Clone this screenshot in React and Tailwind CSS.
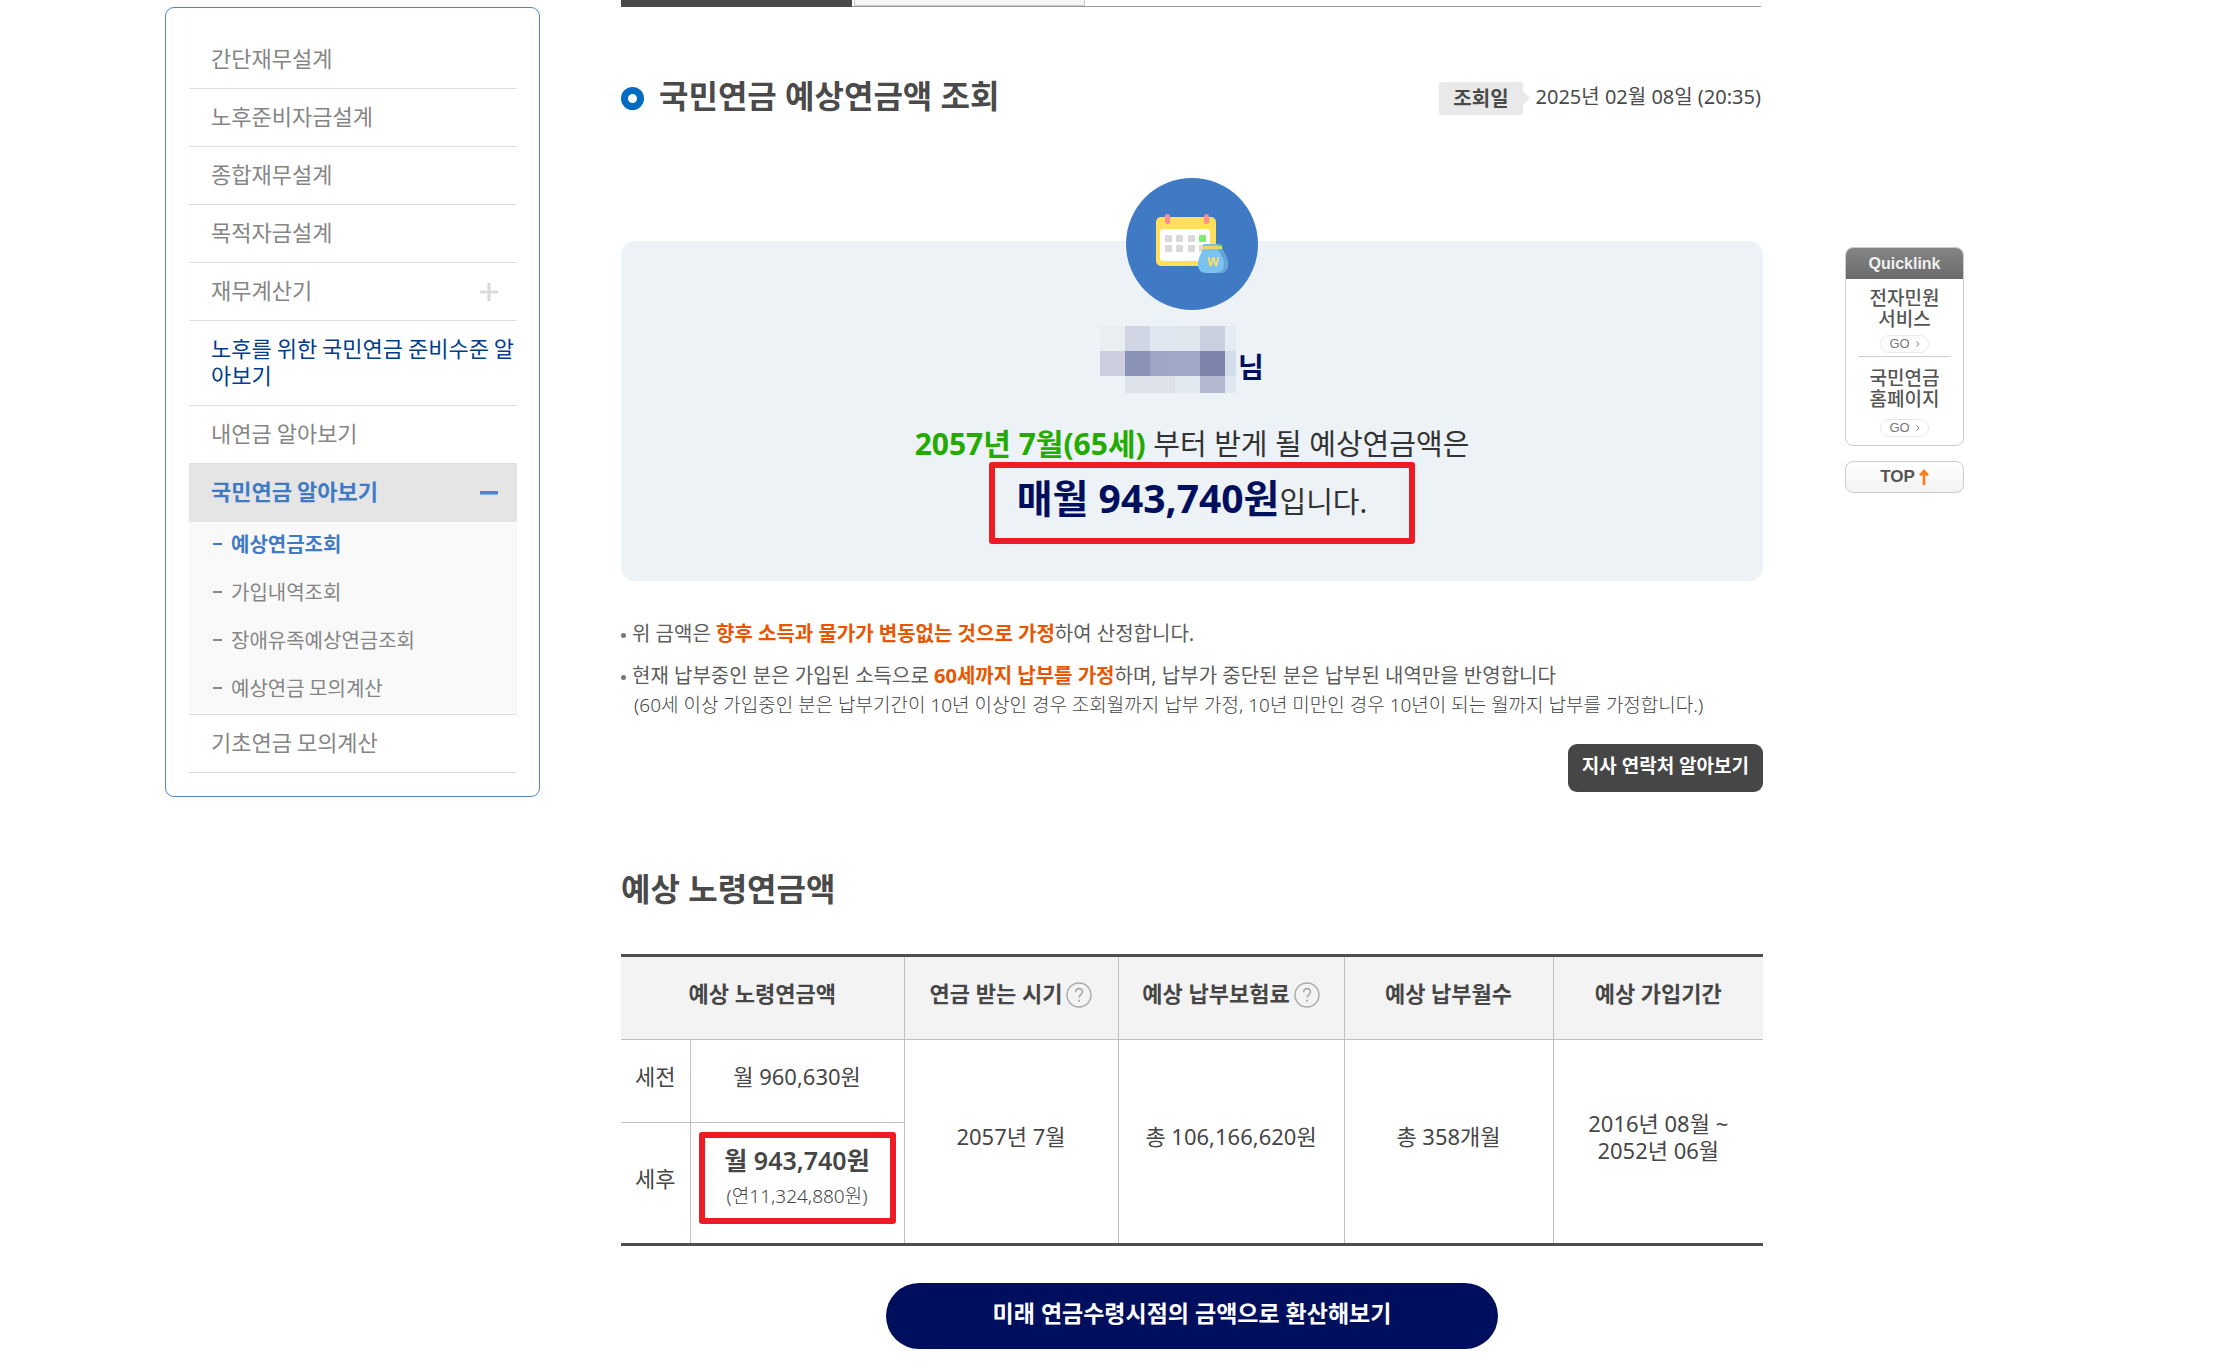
import { useState } from "react";

const menu = [
  { label: "간단재무설계" },
  { label: "노후준비자금설계" },
  { label: "종합재무설계" },
  { label: "목적자금설계" },
  { label: "재무계산기", expandable: true },
  { label: "노후를 위한 국민연금 준비수준 알아보기", visited: true },
  { label: "내연금 알아보기" },
];

const subMenu = ["예상연금조회", "가입내역조회", "장애유족예상연금조회", "예상연금 모의계산"];

// Blocks that hide the customer's name: [x, y, width, height, colour]
const nameBlocks = [
  [0, 0, 25, 25, "#e9eef2"],
  [25, 0, 25, 25, "#cfd5e2"],
  [50, 0, 25, 25, "#dee6ef"],
  [75, 0, 25, 25, "#e0e7ee"],
  [100, 0, 25, 25, "#c9cfde"],
  [125, 0, 11, 25, "#e3ebf3"],
  [0, 25, 25, 25, "#ccd0de"],
  [25, 25, 25, 25, "#8a92b8"],
  [50, 25, 25, 25, "#9fa7c6"],
  [75, 25, 25, 25, "#a0a8c8"],
  [100, 25, 25, 25, "#7d84ac"],
  [125, 25, 11, 25, "#d2deec"],
  [25, 50, 25, 17, "#dde1e9"],
  [50, 50, 25, 17, "#dce1ea"],
  [75, 50, 25, 17, "#e2e9f1"],
  [100, 50, 25, 17, "#b2b9d1"],
  [125, 50, 11, 17, "#dfe7ef"],
];

const PensionIcon = () => (
  <svg viewBox="0 0 132 132" className="w-[132px] h-[132px]">
    <circle cx="66" cy="66" r="66" fill="#407ac5" />
    <rect x="30" y="39" width="60" height="49" rx="5" fill="#ffdf5b" />
    <rect x="34" y="51" width="50" height="32" rx="3" fill="#fff" />
    <rect x="39" y="36" width="5" height="10" rx="2.5" fill="#ff8f8f" />
    <rect x="78" y="36" width="5" height="10" rx="2.5" fill="#ff8f8f" />
    <g fill="#d9d9d9">
      <rect x="39" y="57" width="7" height="7" rx="1" />
      <rect x="50" y="57" width="7" height="7" rx="1" />
      <rect x="62" y="57" width="7" height="7" rx="1" />
      <rect x="39" y="67" width="7" height="7" rx="1" />
      <rect x="50" y="67" width="7" height="7" rx="1" />
      <rect x="62" y="67" width="7" height="7" rx="1" />
      <rect x="73" y="67" width="7" height="7" rx="1" />
    </g>
    <rect x="73" y="57" width="7" height="7" rx="1" fill="#7ded6f" />
    <path d="M77 66h19v4c2 5 6 10 6 16 0 6-3 9-8 9H80c-5 0-8-3-8-9 0-7 4-11 5-16z" fill="#7cc2f0" />
    <path d="M92 66h4v4c2 5 6 10 6 16 0 6-3 9-8 9h-5c5 0 9-3 9-9 0-7-5-11-6-16z" fill="#64a5d5" />
    <rect x="77" y="68" width="19" height="3" fill="#e8d66c" />
    <text x="87" y="88" textAnchor="middle" fontSize="12" fontWeight="700" fill="#ffdf5b">W</text>
  </svg>
);

const HelpIcon = () => (
  <svg viewBox="0 0 26 26" className="w-[26px] h-[26px]" fill="none" stroke="#aaa">
    <circle cx="13" cy="13" r="12" strokeWidth="1.4" />
    <path d="M9.6 10.2c0-2.2 1.4-3.6 3.4-3.6s3.4 1.3 3.4 3.2c0 2.6-3.3 3-3.3 5.8" strokeWidth="1.6" />
    <path d="M13 17.8v2" strokeWidth="1.8" />
  </svg>
);

const GoLink = ({ label }) => (
  <a href="#go" aria-label={label} className="flex items-center gap-[6px] h-[18px] px-2 rounded-full border border-[#e8e8e8] text-[13px] leading-4 text-[#777] font-['Liberation_Sans',sans-serif]">
    GO
    <svg viewBox="0 0 4 6" className="w-1 h-[6px]" fill="none" stroke="#888">
      <path d="M0.5 0.5L3 3L0.5 5.5" />
    </svg>
  </a>
);

const Sidebar = () => {
  const [open, setOpen] = useState(true);

  return (
    <nav className="w-[375px] shrink-0 mt-[7px] pl-[23px] pr-[22px] py-[23px] border border-[#4f85cf] rounded-[9px] font-['Noto_Sans_CJK_KR',sans-serif] text-[22px] leading-[27px] text-[#858585]">
      <ul>
        {menu.map((item) => (
          <li key={item.label} className="flex items-start justify-between pl-[22px] pt-[13px] pb-[17px] border-b border-[#dedede]">
            <a href="#menu" className={item.visited ? "break-all text-[#003d8a]" : ""}>{item.label}</a>
            {item.expandable && (
              <svg viewBox="0 0 18 18" className="w-[18px] h-[18px] mt-[7px] mr-[19px]" stroke="#dadada" strokeWidth="3">
                <path d="M9 0v18M0 9h18" />
              </svg>
            )}
          </li>
        ))}
        <li className="border-b border-[#dedede]">
          <button onClick={() => setOpen(!open)} className="flex w-full items-center justify-between pl-[22px] pr-[19px] pt-[13px] pb-[18px] bg-[#e5e5e5] font-bold text-[#407ac5]">
            국민연금 알아보기
            <svg viewBox="0 0 18 4" className="w-[18px] h-1 mt-1">
              <path d="M0 0h18v3H0z" fill="#4c84d4" />
              <path d="M0 3h18v1H0z" fill="#8fb2e6" />
            </svg>
          </button>
          {open && (
            <ul className="bg-[#f9f9f9] text-[20px] leading-6">
              {subMenu.map((label, i) => (
                <li key={label} className={i === 0 ? "font-bold text-[#407ac5]" : ""}>
                  <a href="#submenu" className="flex items-center h-12 pl-[24px] pb-1">
                    <span className="w-[9px] h-[2px] mr-[9px] bg-current" />
                    {label}
                  </a>
                </li>
              ))}
            </ul>
          )}
        </li>
        <li className="pl-[22px] pt-[13px] pb-[17px] border-b border-[#dedede]">
          <a href="#basic">기초연금 모의계산</a>
        </li>
      </ul>
    </nav>
  );
};

const QuickLink = () => (
  <aside className="w-[119px] shrink-0 mt-[247px] font-['Liberation_Sans','Noto_Sans_CJK_KR',sans-serif]">
    <div className="rounded-lg border border-[#ccc] overflow-hidden">
      <h2 className="h-[31px] text-center text-[16px] leading-[31px] font-bold text-[#f0f0f0] bg-linear-to-b from-[#858585] to-[#6a6a6a]">Quicklink</h2>
      <div className="flex flex-col items-center mx-3 pt-[9px] pb-[3px] border-b border-[#ccc] text-center text-[19px] leading-[21px] font-medium text-[#555]">
        <p className="mb-[5px]">전자민원<br />서비스</p>
        <GoLink label="전자민원 서비스 바로가기" />
      </div>
      <div className="flex flex-col items-center pt-[11px] pb-2 text-center text-[19px] leading-[21px] font-medium text-[#555]">
        <p className="mb-[9px]">국민연금<br />홈페이지</p>
        <GoLink label="국민연금 홈페이지 바로가기" />
      </div>
    </div>
    <a href="#top" className="flex items-center justify-center gap-1 h-8 mt-[15px] rounded-lg border border-[#ccc] bg-linear-to-b from-white to-[#f3f3f3] text-[17px] font-bold text-[#555]">
      TOP
      <svg viewBox="0 0 10 16" className="w-[10px] h-4" fill="none" stroke="#ff7a14" strokeWidth="2.6">
        <path d="M5 16V2M1 6.5L5 2L9 6.5" />
      </svg>
    </a>
  </aside>
);

const Summary = () => (
  <section className="flex flex-col items-center mt-[124px] pb-[47px] rounded-[14px] bg-[#ecf2f6] text-[#333]">
    <div className="-mt-[63px]">
      <PensionIcon />
    </div>
    <div className="flex items-end gap-[2px] mt-4 mr-5 text-[28px] leading-[52px] font-bold text-[#000e5e]">
      <svg viewBox="0 0 136 67" className="w-[136px] h-[67px]" shapeRendering="crispEdges">
        {nameBlocks.map(([x, y, w, h, color]) => (
          <rect key={`${x}-${y}`} x={x} y={y} width={w} height={h} fill={color} />
        ))}
      </svg>
      님
    </div>
    <p className="mt-[29px] text-[29px] leading-[44px]">
      <strong className="text-[30px] text-[#23ab00]">2057년 7월(65세)</strong> 부터 받게 될 예상연금액은
    </p>
    <p className="relative text-[29px] leading-[64px]">
      <strong className="text-[39px] text-[#000e5e]">매월 943,740원</strong>입니다.
      <span className="absolute -left-7 -right-12 -top-1 h-[82px] border-[6px] border-[#ed1c24] rounded-[3px]" />
    </p>
  </section>
);

const Notes = () => (
  <ul className="mt-[38px] text-[20px] leading-[30px] text-[#5c5c5c]">
    <li className="flex">
      <span className="w-[5px] h-[5px] mt-[14px] mr-[6px] rounded-full bg-[#777]" />
      <p>위 금액은 <strong className="text-[#ea5500]">향후 소득과 물가가 변동없는 것으로 가정</strong>하여 산정합니다.</p>
    </li>
    <li className="flex mt-3">
      <span className="w-[5px] h-[5px] mt-[14px] mr-[6px] rounded-full bg-[#777]" />
      <div>
        <p>현재 납부중인 분은 가입된 소득으로 <strong className="text-[#ea5500]">60세까지 납부를 가정</strong>하며, 납부가 중단된 분은 납부된 내역만을 반영합니다</p>
        <p className="pl-[2px] text-[19px] leading-7 font-light text-[#444]">(60세 이상 가입중인 분은 납부기간이 10년 이상인 경우 조회월까지 납부 가정, 10년 미만인 경우 10년이 되는 월까지 납부를 가정합니다.)</p>
      </div>
    </li>
  </ul>
);

const PensionTable = () => (
  <table className="w-full table-fixed border-collapse mt-11 border-y-[3px] border-[#4f4d4d] text-center text-[22px] leading-[27px] text-[#464646]">
    <colgroup>
      <col className="w-[69px]" />
      <col className="w-[214px]" />
      <col className="w-[214px]" />
      <col className="w-[226px]" />
      <col className="w-[209px]" />
      <col className="w-[210px]" />
    </colgroup>
    <thead className="bg-[#f3f3f3]">
      <tr className="h-[84px] border-b border-[#c0c0c0]">
        <th colSpan={2} className="pb-[10px]">예상 노령연금액</th>
        <th className="pb-[10px] border-l border-[#c0c0c0]">
          <span className="flex items-center justify-center gap-1">
            연금 받는 시기
            <button aria-label="연금 받는 시기 도움말" className="mt-1"><HelpIcon /></button>
          </span>
        </th>
        <th className="pb-[10px] border-l border-[#c0c0c0]">
          <span className="flex items-center justify-center gap-1">
            예상 납부보험료
            <button aria-label="예상 납부보험료 도움말" className="mt-1"><HelpIcon /></button>
          </span>
        </th>
        <th className="pb-[10px] border-l border-[#c0c0c0]">예상 납부월수</th>
        <th className="pb-[10px] border-l border-[#c0c0c0]">예상 가입기간</th>
      </tr>
    </thead>
    <tbody>
      <tr className="h-[83px]">
        <td className="pb-[10px] border-b border-[#c0c0c0]">세전</td>
        <td className="pb-[10px] border-b border-l border-[#c0c0c0]">월 960,630원</td>
        <td rowSpan={2} className="pb-[10px] border-l border-[#c0c0c0]">2057년 7월</td>
        <td rowSpan={2} className="pb-[10px] border-l border-[#c0c0c0]">총 106,166,620원</td>
        <td rowSpan={2} className="pb-[10px] border-l border-[#c0c0c0]">총 358개월</td>
        <td rowSpan={2} className="pb-[10px] border-l border-[#c0c0c0]">2016년 08월 ~<br />2052년 06월</td>
      </tr>
      <tr className="h-[122px]">
        <td className="pb-[10px]">세후</td>
        <td className="relative pb-[10px] border-l border-[#c0c0c0]">
          <strong className="block text-[25px] leading-9 font-semibold">월 943,740원</strong>
          <span className="block text-[19px] leading-9 font-light">(연11,324,880원)</span>
          <span className="absolute left-2 right-2 top-[9px] h-[92px] border-[6px] border-[#ed1c24] rounded-[3px]" />
        </td>
      </tr>
    </tbody>
  </table>
);

const App = () => {
  return (
    <div className="flex items-start pl-[165px] pr-[268px] bg-white font-['Noto_Sans','Noto_Sans_CJK_KR',sans-serif]">
      <Sidebar />
      <main className="flex-1 min-w-0 ml-[81px] mr-[82px]">
        <div className="flex h-[7px] mr-[2px] gap-[2px] border-b border-[#999]">
          <div className="w-[231px] h-[7px] bg-[#4a4a4a]" />
          <div className="w-[231px] h-[6px] border-x border-b border-[#ccc] bg-[#f5f5f5]" />
        </div>

        <header className="flex items-center justify-between mt-[68px] mr-[2px]">
          <h1 className="flex items-center gap-[15px] text-[32px] leading-[42px] font-bold text-[#4a4a4a]">
            <span className="w-[23px] h-[23px] mt-1 rounded-full border-[7px] border-[#006bc0]" />
            국민연금 예상연금액 조회
          </h1>
          <p className="flex items-center text-[20px] leading-[33px] text-[#4a4a4a]">
            <strong className="mt-1 px-[14px] rounded-[3px] bg-[#e9e9e9] leading-[33px]">조회일</strong>
            <svg viewBox="0 0 7 14" className="w-[7px] h-[14px] mt-1 mr-[6px]">
              <path d="M0 0L7 7L0 14z" fill="#e9e9e9" />
            </svg>
            2025년 02월 08일 (20:35)
          </p>
        </header>

        <Summary />
        <Notes />

        <div className="flex justify-end mt-[25px]">
          <button className="h-12 px-[14px] pb-1 rounded-[9px] bg-[#464646] text-[19px] font-bold text-white">지사 연락처 알아보기</button>
        </div>

        <h2 className="mt-[76px] text-[32px] leading-[42px] font-bold text-[#4a4a4a]">예상 노령연금액</h2>
        <PensionTable />

        <div className="flex justify-center mt-[37px] mb-[21px]">
          <button className="h-[66px] px-[107px] pb-[6px] rounded-full bg-[#000e5e] text-[23px] font-bold text-white">미래 연금수령시점의 금액으로 환산해보기</button>
        </div>
      </main>
      <QuickLink />
    </div>
  );
};

export default App;
